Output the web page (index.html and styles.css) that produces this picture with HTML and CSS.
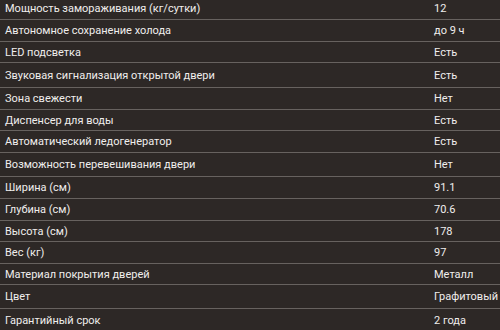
FILE: index.html
```html
<!DOCTYPE html>
<html lang="ru">
<head>
<meta charset="utf-8">
<link rel="stylesheet" href="styles.css">
</head>
<body>
<div class="specs">
  <div class="row first"><span class="name">Мощность замораживания (кг/сутки)</span><span class="val">12</span></div>
  <div class="row h22"><span class="name">Автономное сохранение холода</span><span class="val">до 9 ч</span></div>
  <div class="row h21"><span class="name">LED подсветка</span><span class="val">Есть</span></div>
  <div class="row h25"><span class="name">Звуковая сигнализация открытой двери</span><span class="val">Есть</span></div>
  <div class="row h22"><span class="name">Зона свежести</span><span class="val">Нет</span></div>
  <div class="row h21"><span class="name">Диспенсер для воды</span><span class="val">Есть</span></div>
  <div class="row h22"><span class="name">Автоматический ледогенератор</span><span class="val">Есть</span></div>
  <div class="row h24"><span class="name">Возможность перевешивания двери</span><span class="val">Нет</span></div>
  <div class="row h22"><span class="name">Ширина (см)</span><span class="val">91.1</span></div>
  <div class="row h22"><span class="name">Глубина (см)</span><span class="val">70.6</span></div>
  <div class="row h21"><span class="name">Высота (см)</span><span class="val">178</span></div>
  <div class="row h22"><span class="name">Вес (кг)</span><span class="val">97</span></div>
  <div class="row h21"><span class="name">Материал покрытия дверей</span><span class="val">Металл</span></div>
  <div class="row h24"><span class="name">Цвет</span><span class="val">Графитовый</span></div>
  <div class="row h22 last"><span class="name">Гарантийный срок</span><span class="val">2 года</span></div>
</div>
</body>
</html>
```
FILE: styles.css
```css
html, body {
  margin: 0;
  padding: 0;
  background: #2d2826;
  overflow: hidden;
}
.specs {
  width: 500px;
  font-family: Roboto, "Liberation Sans", sans-serif;
  font-size: 11px;
  color: #f0eeed;
}
.row {
  box-sizing: border-box;
  display: grid;
  grid-template-columns: 434px 1fr;
  align-items: center;
  border-bottom: 1px solid #67625f;
  white-space: nowrap;
}
.name { padding-left: 5px; }
.first { height: 20px; padding-bottom: 2px; }
.h21 { height: 21px; }
.h22 { height: 22px; }
.h24 { height: 24px; }
.h25 { height: 25px; }
.last { border-bottom: none; }
```
